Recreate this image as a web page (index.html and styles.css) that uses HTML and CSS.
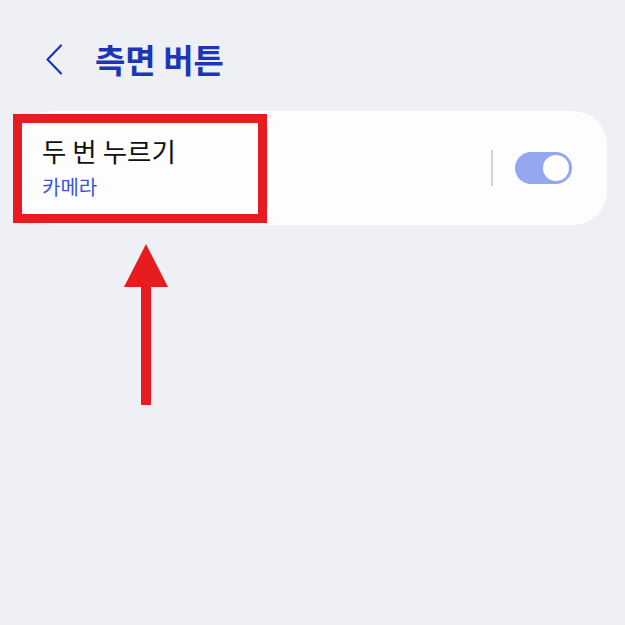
FILE: index.html
```html
<!DOCTYPE html>
<html>
	<head>
		<meta charset="UTF-8">
		<title>측면 버튼</title>
		<link rel="stylesheet" href="styles.css">
	</head>
	<body>
		<div class="page">
			<div class="header">
				<a href="javascript:;" class="back">
					<svg width="18" height="31" viewBox="0 0 18 31"><path d="M16 1.5 L2.5 15.5 L16 29.5" fill="none" stroke="#1c36b8" stroke-width="2.2" stroke-linecap="round" stroke-linejoin="round"/></svg>
				</a>
				<h1 class="title">측면 버튼</h1>
			</div>
			<div class="card">
				<div class="info">
					<div class="name">두 번 누르기</div>
					<div class="sub">카메라</div>
				</div>
				<div class="divider"></div>
				<div class="switch on"><span class="knob"></span></div>
			</div>
			<!-- 표시용 빨간 박스, 화살표 -->
			<div class="mark"></div>
			<svg class="arrow" width="44" height="161" viewBox="0 0 44 161"><polygon points="22,0 44,43 0,43" fill="#e61c1f"/><rect x="17" y="42" width="10" height="119" fill="#e61c1f"/></svg>
		</div>
	</body>
</html>
```
FILE: styles.css
```css
*{
	margin:0px;
	padding:0px;
}
body{
	background:#eff0f5;
	font-family:"Noto Sans CJK KR","Noto Sans",sans-serif;
}
.page{
	position:relative;
	width:625px;
	height:625px;
}
.header{
	display:flex;
	align-items:center;
	height:60px;
	padding-top:29px;
	padding-left:45px;
}
.back{
	display:block;
	width:18px;
	height:31px;
	margin-right:32px;
}
.back svg{
	display:block;
}
.title{
	font-size:33px;
	font-weight:700;
	color:#1c36b8;
}
.card{
	display:flex;
	align-items:center;
	height:114px;
	margin:22px 18px 0 18px;
	padding:0 35px 0 24px;
	background:#fdfdfe;
	border-radius:34px;
}
.info{
	flex:1;
}
.name{
	font-size:26.5px;
	line-height:34px;
	color:#111;
	margin-top:-3px;
}
.sub{
	font-size:20px;
	line-height:26px;
	color:#3b55d8;
	margin-top:6px;
}
.divider{
	width:2px;
	height:36px;
	background:#d4d4d8;
	margin-right:22px;
}
.switch{
	width:57px;
	height:32px;
	border-radius:16px;
	background:#96a7f2;
	display:flex;
	align-items:center;
	justify-content:flex-end;
	padding:0 3px;
	box-sizing:border-box;
}
.knob{
	display:block;
	width:26px;
	height:26px;
	border-radius:50%;
	background:#fff;
}
.mark{
	position:absolute;
	left:13px;
	top:114px;
	width:236px;
	height:91px;
	border:9px solid #e61c1f;
}
.arrow{
	position:absolute;
	left:124px;
	top:244px;
}
```
